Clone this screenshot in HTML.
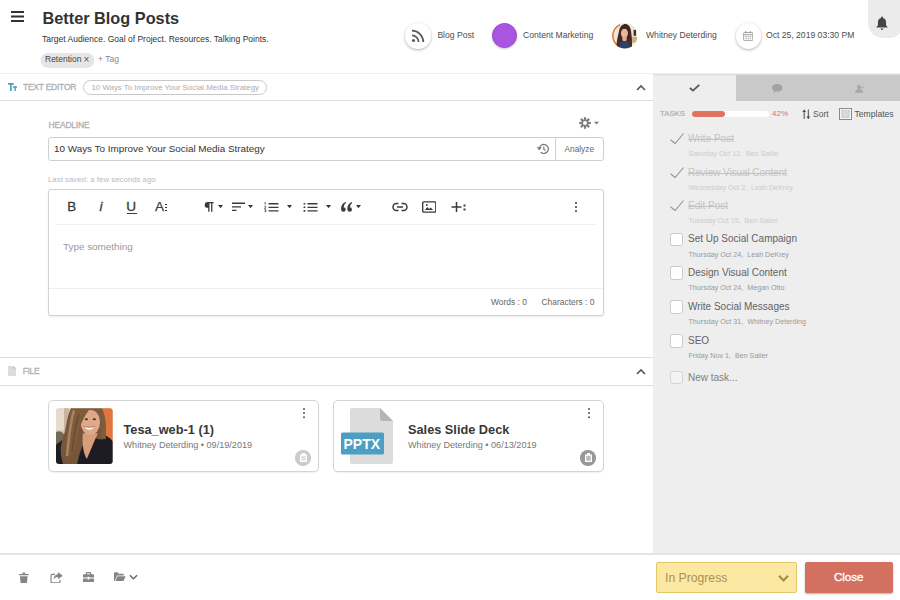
<!DOCTYPE html>
<html>
<head>
<meta charset="utf-8">
<title>Better Blog Posts</title>
<style>
*{box-sizing:border-box;margin:0;padding:0}
html,body{width:900px;height:600px;overflow:hidden;background:#fff}
body{font-family:"Liberation Sans",sans-serif;color:#333;position:relative}
.abs{position:absolute}
.t{position:absolute;white-space:nowrap;line-height:1}
/* header */
#hdr{left:0;top:0;width:900px;height:76px;background:#fff;background-image:linear-gradient(#f1f1f1,#f1f1f1),linear-gradient(#dcdcdc,#dcdcdc),linear-gradient(#ebebeb,#ebebeb);background-size:100% 1px;background-position:0 73px,0 74px,0 75px;background-repeat:no-repeat}
#title{left:42.5px;top:10px;font-size:16.3px;font-weight:bold;color:#333}
#sub{left:42px;top:35px;font-size:8.5px;color:#333}
#tag{left:41px;top:53px;height:13.5px;width:53px;border-radius:7px;background:#e6e6e6;box-shadow:0 .5px 1px rgba(0,0,0,.18)}
#tagtx{left:45px;top:55px;font-size:8.5px;color:#444}
#addtag{left:98px;top:55px;font-size:8.5px;color:#888}
.circ{border-radius:50%;background:#fff;box-shadow:0 1px 3px rgba(0,0,0,.3)}
.meta{font-size:8.6px;color:#4c4c4c;top:31px}
#bell{left:868px;top:0;width:33px;height:38px;background:#ebebeb;border-radius:0 0 10px 15px}
/* section bars */
.bar{left:0;width:653px;height:27px;background:#fff;border-bottom:1px solid #dedede}
.barlbl{font-size:8px;color:#aaa;letter-spacing:.2px}
/* sidebar */
#side{left:653px;top:76px;width:247px;height:480px;background:#eeeeee}
#tabs{left:736px;top:75px;width:164px;height:26px;background:#c9c9c9}
.task{font-size:10px;color:#636363}
.tsub{font-size:7.15px;color:#999}
.done{color:#c3c3c3}
.doneS{color:#cbcbcb}
.cb{width:13.5px;height:13.5px;border:1px solid #cacaca;border-radius:2.5px;background:#fff}
/* footer */
#ftr{left:0;top:553px;width:900px;height:47px;background:#fff;border-top:2px solid #e4e4e4}
#prog{left:656px;top:562px;width:141px;height:31px;background:#fbe8a3;border:1px solid #e3c866;border-radius:2px}
#close{left:805px;top:562px;width:88px;height:31px;background:#d4705f;border-radius:2px;box-shadow:0 1px 2px rgba(0,0,0,.3)}
/* cards */
.card{height:72px;width:271px;border:1px solid #d4d4d4;border-radius:5px;background:#fff;box-shadow:0 1px 1px rgba(0,0,0,.06)}
.ctitle{font-size:12.75px;font-weight:bold;color:#383838}
.csub{font-size:9.1px;color:#777}
</style>
</head>
<body>
<!-- HEADER -->
<div id="hdr" class="abs"></div>
<svg class="abs" style="left:11px;top:11px" width="14" height="11" viewBox="0 0 14 11"><path d="M0 1h13M0 5.5h13M0 10h13" stroke="#333" stroke-width="1.8" fill="none"/></svg>
<div id="title" class="t">Better Blog Posts</div>
<div id="sub" class="t">Target Audience. Goal of Project. Resources. Talking Points.</div>
<div id="tag" class="abs"></div>
<div id="tagtx" class="t">Retention<span style="font-size:10px;color:#555;position:relative;left:2px;top:.5px;line-height:0">×</span></div>
<div id="addtag" class="t">+ Tag</div>


<!-- header meta -->
<div class="abs circ" style="left:405px;top:23.200px;width:25.500px;height:25.500px"></div>
<svg class="abs" style="left:411px;top:29px" width="14" height="14" viewBox="0 0 14 14"><circle cx="2.500" cy="11.500" r="1.550" fill="#5a5a5a"/><path d="M1 6.400a6.600 6.600 0 0 1 6.600 6.600M1 1.700A11.300 11.300 0 0 1 12.300 13" stroke="#5a5a5a" stroke-width="1.750" fill="none"/></svg>
<div class="t meta" style="left:437.400px">Blog Post</div>
<div class="abs" style="left:492.200px;top:23.200px;width:25px;height:25px;border-radius:50%;background:#a955e2;border:1px solid #9a49d2;box-shadow:0 1px 2px rgba(0,0,0,.22)"></div>
<div class="t meta" style="left:523px">Content Marketing</div>
<svg class="abs" style="left:611.500px;top:23px" width="25.500" height="25.500" viewBox="0 0 26 26"><defs><clipPath id="av"><circle cx="13" cy="13" r="13"/></clipPath><filter id="bl2" x="-10%" y="-10%" width="120%" height="120%"><feGaussianBlur stdDeviation=".45"/></filter></defs><g clip-path="url(#av)"><rect width="26" height="26" fill="#efe6da"/><g filter="url(#bl2)"><circle cx="13" cy="13" r="12.300" fill="none" stroke="#e57a34" stroke-width="1.800" stroke-dasharray="26 60" transform="rotate(125 13 13)"/><rect x="22" y="7" width="2.500" height="6" fill="#3a3030"/><rect x="19" y="14" width="7" height="6" fill="#c9b48a"/><path d="M5 27C4 20 6 14 7 9 8 3 11 1 13.500 1S19 3 19.500 9C20 14 21 20 20 27z" fill="#3f271c"/><ellipse cx="12.700" cy="10.500" rx="3.600" ry="4.800" fill="#e6b79c"/><path d="M9 7C10 4 15 3.500 17 7 15 5.500 11 5.500 9 7z" fill="#3f271c"/><path d="M10.500 14h4.500v3.500l-2.200 1.500-2.300-1.500z" fill="#e0ac90"/><path d="M6 27C6 21 9 17.500 13 18.500 17 17.500 20 21 20 27z" fill="#2f4068"/><path d="M6.500 16C5.500 19 5 22 5.500 26L8 25C8 21 8 18 9 15zM19 16C20 19 20.500 22 20 26L17.500 25C17.500 21 17.500 18 16.500 15z" fill="#4a3020"/></g></g></svg>
<div class="t meta" style="left:646px">Whitney Deterding</div>
<div class="abs circ" style="left:735.500px;top:23.200px;width:25.500px;height:25.500px"></div>
<svg class="abs" style="left:743px;top:30.800px" width="10.400" height="10.200" viewBox="0 0 11 11"><rect x=".6" y="1.6" width="9.8" height="8.8" rx="1" fill="none" stroke="#999" stroke-width="1"/><path d="M.6 4h9.8M3 0v2.5M8 0v2.5" stroke="#999" stroke-width="1"/><path d="M2.5 5.5h1.5v1.3H2.5zM4.8 5.5h1.5v1.3H4.8zM7.1 5.5h1.5v1.3H7.1zM2.5 7.7h1.5v1.3H2.5zM4.8 7.7h1.5v1.3H4.8zM7.1 7.7h1.5v1.3H7.1z" fill="#aaa"/></svg>
<div class="t meta" style="left:766px">Oct 25, 2019 03:30 PM</div>
<div id="bell" class="abs"></div>
<svg class="abs" style="left:876.400px;top:16px" width="12" height="14.500" viewBox="0 0 12 15"><path d="M6 0.5c.6 0 1 .4 1 1v.5c2 .5 3.200 2.200 3.200 4.300v3.200l1.500 1.800v.7H.3v-.7l1.500-1.800V6.300c0-2.100 1.200-3.800 3.200-4.300v-.5c0-.6.400-1 1-1zM4.500 13h3a1.500 1.500 0 0 1-3 0z" fill="#444"/></svg>

<!-- SECTION: TEXT EDITOR -->
<div class="abs bar" style="top:74px"></div>
<div class="abs bar" style="top:357px;border-top:1px solid #dedede;height:29px"></div>


<!-- text editor bar contents -->
<svg class="abs" style="left:7.7px;top:83px" width="9.8" height="8.2" viewBox="0 0 12 10" preserveAspectRatio="none"><path d="M0 0h7v2H4.500v8h-2V2H0zM6 4h5.500v1.700H9.600V10H7.900V5.700H6z" fill="#4a9cc0"/></svg>
<div class="t" style="left:23px;top:83px;font-size:8.5px;letter-spacing:-.25px;color:#b0b0b0;-webkit-text-stroke:.3px #b0b0b0">TEXT EDITOR</div>
<div class="abs" style="left:83px;top:80px;width:183.500px;height:15px;border:1px solid #c8c8c8;border-radius:7.500px;background:#fff"></div>
<div class="t" style="left:91.500px;top:84px;font-size:7.85px;color:#adadad">10 Ways To Improve Your Social Media Strategy</div>
<svg class="abs" style="left:636px;top:84px" width="10" height="7" viewBox="0 0 10 7"><path d="M1 6l4-4 4 4" stroke="#555" stroke-width="1.600" fill="none"/></svg>

<!-- headline -->
<div class="t" style="left:48.500px;top:121px;font-size:8.5px;color:#b0b0b0;letter-spacing:-.2px;-webkit-text-stroke:.3px #b0b0b0">HEADLINE</div>
<svg class="abs" style="left:578.700px;top:116.500px" width="22" height="12" viewBox="0 0 22 12"><g transform="translate(6 6)" fill="#7c7c7c"><circle r="3.600"/><g id="gt"><rect x="-1.100" y="-5.800" width="2.200" height="3" /><rect x="-1.100" y="2.800" width="2.200" height="3"/></g><use href="#gt" transform="rotate(45)"/><use href="#gt" transform="rotate(90)"/><use href="#gt" transform="rotate(135)"/><circle r="2" fill="#fff"/></g><path d="M15 4.800h5l-2.500 2.800z" fill="#777"/></svg>
<div class="abs" style="left:48px;top:137px;width:556px;height:24px;border:1px solid #cfcfcf;border-radius:3px;background:#fff"></div>
<div class="abs" style="left:555px;top:137px;width:1px;height:24px;background:#cfcfcf"></div>
<div class="t" style="left:54px;top:144px;font-size:9.9px;color:#333">10 Ways To Improve Your Social Media Strategy</div>
<svg class="abs" style="left:536px;top:142.500px" width="13" height="12" viewBox="0 0 12 11"><path d="M3 5.500a4.200 4.200 0 1 1 1.300 3" stroke="#777" stroke-width="1.100" fill="none"/><path d="M.6 3.800h4.800L3 6.600z" fill="#777"/><path d="M7.200 3.200v2.500l1.700 1" stroke="#777" stroke-width="1" fill="none"/></svg>
<div class="t" style="left:564.500px;top:145px;font-size:8.3px;color:#666">Analyze</div>
<div class="t" style="left:48px;top:176px;font-size:7.85px;color:#bbb">Last saved: a few seconds ago</div>

<!-- editor box -->
<div class="abs" style="left:48px;top:189px;width:556px;height:127px;border:1px solid #d2d2d2;border-radius:3px;background:#fff;box-shadow:0 1px 2px rgba(0,0,0,.08)"></div>
<div class="abs" style="left:56px;top:224px;width:540px;height:1px;background:#f1f1f1"></div>
<div class="abs" style="left:49px;top:288px;width:554px;height:1px;background:#eeeeee"></div>
<div class="t" style="left:63px;top:241.500px;font-size:9.9px;color:#999">Type something</div>
<div class="t" style="left:491px;top:297.500px;font-size:8.45px;color:#666">Words : 0</div>
<div class="t" style="left:541.500px;top:297.500px;font-size:8.45px;color:#666">Characters : 0</div>
<!-- toolbar -->
<div class="t" style="left:67.3px;top:200px;font-size:13.400px;color:#3a3a3a;-webkit-text-stroke:.3px #3a3a3a">B</div>
<div class="t" style="left:99.500px;top:200px;font-size:13.600px;color:#3a3a3a;font-style:italic;-webkit-text-stroke:.3px #3a3a3a">i</div>
<div class="t" style="left:126.200px;top:200px;font-size:13.600px;color:#3a3a3a;-webkit-text-stroke:.3px #3a3a3a">U</div>
<div class="abs" style="left:126.500px;top:212.500px;width:10.200px;height:1.300px;background:#3a3a3a"></div>
<div class="t" style="left:155px;top:200px;font-size:13.600px;color:#3a3a3a;-webkit-text-stroke:.25px #3a3a3a">A</div>
<div class="abs" style="left:165.300px;top:203.700px;width:1.700px;height:1.700px;background:#3a3a3a;box-shadow:0 3px 0 #3a3a3a,0 6px 0 #3a3a3a"></div>
<svg class="abs" style="left:204px;top:202px" width="9.600" height="9.800" viewBox="0 0 9.600 9.800"><path d="M3.600 0H9.600V1.300H8.400V9.800H7.100V1.300H5.500V9.800H4.200V5.800H3.600A2.900 2.900 0 0 1 3.600 0z" fill="#3a3a3a"/></svg>
<svg class="abs" style="left:218.2px;top:205.3px" width="5" height="3.2" viewBox="0 0 5 3.2"><path d="M0 0h5L2.500 3.200z" fill="#333"/></svg>
<svg class="abs" style="left:232px;top:202px" width="13" height="10" viewBox="0 0 13 10"><path d="M0 1.200h13M0 4.800h9M0 8.400h4.500" stroke="#3a3a3a" stroke-width="1.350"/></svg>
<svg class="abs" style="left:248.3px;top:205.3px" width="5" height="3.2" viewBox="0 0 5 3.2"><path d="M0 0h5L2.500 3.200z" fill="#333"/></svg>
<svg class="abs" style="left:263.500px;top:201.500px" width="15" height="11" viewBox="0 0 15 11"><path d="M4.500 1.700h10M4.500 5.300h10M4.500 8.900h10" stroke="#3a3a3a" stroke-width="1.350"/><path d="M1.300 .2v2.600M.5 .9l.8-.7M.4 4.300h1.500v.8L.4 6.300h1.600M.4 7.600h1.500v1H1.200h.7v1.100H.4" stroke="#3a3a3a" stroke-width=".7" fill="none"/></svg>
<svg class="abs" style="left:287px;top:205.3px" width="5" height="3.2" viewBox="0 0 5 3.2"><path d="M0 0h5L2.500 3.200z" fill="#333"/></svg>
<svg class="abs" style="left:302.500px;top:201.500px" width="15" height="11" viewBox="0 0 15 11"><path d="M4.500 1.700h10M4.500 5.300h10M4.500 8.900h10" stroke="#3a3a3a" stroke-width="1.350"/><path d="M.6 .9h1.700v1.600H.6zM.6 4.500h1.700v1.600H.6zM.6 8.100h1.700v1.600H.6z" fill="#3a3a3a"/></svg>
<svg class="abs" style="left:326px;top:205.3px" width="5" height="3.2" viewBox="0 0 5 3.2"><path d="M0 0h5L2.500 3.200z" fill="#333"/></svg>
<svg class="abs" style="left:340.500px;top:202px" width="11.600" height="10" viewBox="0 0 11.600 10"><g id="q6" fill="#3a3a3a"><circle cx="2.400" cy="7.500" r="2.250"/><path d="M0 7.300C0 3.300 1.800 1 4.700 0L5.200 1C3.500 2 2.800 3.500 2.800 5.200z"/></g><use href="#q6" x="6.300"/></svg>
<svg class="abs" style="left:356.2px;top:205.3px" width="5" height="3.2" viewBox="0 0 5 3.2"><path d="M0 0h5L2.500 3.200z" fill="#333"/></svg>
<svg class="abs" style="left:391.500px;top:202px" width="16" height="10" viewBox="0 0 16 10"><path d="M6.500 1.500H4.500a3.500 3.500 0 0 0 0 7h2M9.500 1.500h2a3.500 3.500 0 0 1 0 7h-2M5 5h6" stroke="#3a3a3a" stroke-width="1.500" fill="none"/></svg>
<svg class="abs" style="left:421.500px;top:201px" width="14.500" height="12" viewBox="0 0 15 12"><rect x=".7" y=".7" width="13.600" height="10.600" rx="1.200" stroke="#3a3a3a" stroke-width="1.400" fill="none"/><path d="M3 9l2.500-3 2 2 1.500-1.500L11.500 9z" fill="#3a3a3a"/><circle cx="5" cy="4" r="1" fill="#3a3a3a"/></svg>
<svg class="abs" style="left:451px;top:201px" width="15" height="12" viewBox="0 0 15 12"><path d="M5.500 1v10M.5 6h10" stroke="#3a3a3a" stroke-width="1.500"/><path d="M12.500 3.500h2v2h-2zM12.500 7.500h2v2h-2z" fill="#3a3a3a"/></svg>
<div class="abs" style="left:575px;top:202px;width:2px;height:2px;background:#3a3a3a;box-shadow:0 4px 0 #3a3a3a,0 8px 0 #3a3a3a;border-radius:1px"></div>

<!-- file bar -->
<svg class="abs" style="left:8px;top:365.800px" width="8" height="10.500" viewBox="0 0 8 10.500"><path d="M0 0h5.500L8 2.500v8H0z" fill="#dcdcdc"/><path d="M5.500 0v2.500H8z" fill="#b8b8b8"/></svg>
<div class="t" style="left:22.800px;top:367px;font-size:8.5px;letter-spacing:-.4px;color:#b0b0b0;-webkit-text-stroke:.3px #b0b0b0">FILE</div>
<svg class="abs" style="left:636px;top:368px" width="10" height="7" viewBox="0 0 10 7"><path d="M1 6l4-4 4 4" stroke="#555" stroke-width="1.600" fill="none"/></svg>

<!-- card 1 -->
<div class="abs card" style="left:48px;top:400px"></div>
<svg class="abs" style="left:56px;top:407.700px" width="56.700" height="56.300" viewBox="0 0 57 56"><defs><clipPath id="th"><rect width="57" height="56" rx="3"/></clipPath><filter id="bl" x="-10%" y="-10%" width="120%" height="120%"><feGaussianBlur stdDeviation=".7"/></filter></defs><g clip-path="url(#th)"><rect width="57" height="56" fill="#d6c6b2"/><g filter="url(#bl)"><rect x="-2" y="-2" width="16" height="24" fill="#e6dccd"/><rect x="8" y="-2" width="5" height="30" fill="#c9b59d"/><ellipse cx="3" cy="33" rx="7" ry="10" fill="#6f6b56"/><rect x="46" y="-2" width="13" height="37" fill="#e0763a"/><path d="M-2 58V39C3 33 9 30 17 29L47 26C53 28 59 33 59 39V58z" fill="#1d1e21"/><path d="M16-2C10 9 11 20 7 30 3 40 5 50 8 58H21C23 46 26 38 30 32L48 31C51 20 50 8 45-2z" fill="#76553a"/><path d="M27 25L42 25 31 51C28 46 26 38 27 25z" fill="#d79d7c"/><ellipse cx="34.500" cy="14" rx="9.800" ry="13" fill="#e0a888"/><path d="M16-2C12 10 12 22 9 34L13 52 20 40C21 28 24 14 33 2 38 1 43 4 45 12 46 18 46 24 45 30L50 31C51 18 50 6 45-2z" fill="#7d5b3e"/><path d="M18 2C14 16 13 30 11 48" stroke="#a8845e" stroke-width="2.500" fill="none"/><path d="M23 6C19 18 18 30 16 44" stroke="#5f4029" stroke-width="1.500" fill="none" opacity=".6"/><ellipse cx="30.500" cy="11" rx="1.700" ry=".9" fill="#4a3325"/><ellipse cx="38.500" cy="11" rx="1.700" ry=".9" fill="#4a3325"/><path d="M28.500 18.500C31 22.500 36 22.500 38.500 18.500 35 19.500 32 19.500 28.500 18.500z" fill="#fff"/><path d="M28 18C31 19.500 36 19.500 39 18" stroke="#b5655c" stroke-width=".8" fill="none"/><path d="M40 30L33 50 48 56 57 45 57 36z" fill="#1d1e21"/></g></g></svg>
<div class="t ctitle" style="left:123.500px;top:424px">Tesa_web-1 (1)</div>
<div class="t csub" style="left:123.500px;top:441px">Whitney Deterding • 09/19/2019</div>
<div class="abs" style="left:303px;top:407.800px;width:2.200px;height:2.200px;background:#555;box-shadow:0 4.100px 0 #555,0 8.200px 0 #555;border-radius:50%"></div>
<div class="abs" style="left:295.300px;top:450px;width:15.600px;height:15.600px;border-radius:50%;background:#cbcbcb"></div>
<svg class="abs" style="left:299.600px;top:453.200px" width="7" height="9" viewBox="0 0 7 9"><path d="M0 1.500h7V9H0z" fill="#fff"/><path d="M2 0h3v2H2z" fill="#fff"/><path d="M1.200 2.800h4.600v5H1.200z" fill="#cdcdcd" opacity=".6"/></svg>

<!-- card 2 -->
<div class="abs card" style="left:333px;top:400px"></div>
<svg class="abs" style="left:340px;top:408px" width="54" height="57" viewBox="0 0 54 57"><path d="M12 0h28l13 13v41a2 2 0 0 1-2 2H12a2 2 0 0 1-2-2V2a2 2 0 0 1 2-2z" fill="#dcdcdc"/><path d="M40 0l13 13H42a2 2 0 0 1-2-2z" fill="#b5b5b5"/><rect x="1" y="24.500" width="43" height="22" rx="1.500" fill="#4c9ec4"/></svg>
<div class="t" style="left:343.500px;top:436.5px;font-size:14px;font-weight:bold;color:#fff;">PPTX</div>
<div class="t ctitle" style="left:408px;top:424px">Sales Slide Deck</div>
<div class="t csub" style="left:408px;top:441px">Whitney Deterding • 06/13/2019</div>
<div class="abs" style="left:587.500px;top:407.800px;width:2.200px;height:2.200px;background:#555;box-shadow:0 4.100px 0 #555,0 8.200px 0 #555;border-radius:50%"></div>
<div class="abs" style="left:580.200px;top:450px;width:15.600px;height:15.600px;border-radius:50%;background:#989898"></div>
<svg class="abs" style="left:584.500px;top:453.200px" width="7" height="9" viewBox="0 0 7 9"><path d="M0 1.500h7V9H0z" fill="#fff"/><path d="M2 0h3v2H2z" fill="#fff"/><path d="M1.200 2.800h4.600v5H1.200z" fill="#8f8f8f" opacity=".6"/></svg>

<!-- SIDEBAR -->
<div id="side" class="abs"></div>
<div id="tabs" class="abs"></div>


<!-- tab icons -->
<svg class="abs" style="left:688.8px;top:84.3px" width="11.200" height="7.800" viewBox="0 0 12 9" preserveAspectRatio="none"><path d="M1 4.600l3.300 3L11 1" stroke="#5a5a5a" stroke-width="2.100" fill="none"/></svg>
<svg class="abs" style="left:771.5px;top:83.7px" width="10.500" height="9.500" viewBox="0 0 11 10"><path d="M5.500 0C8.500 0 11 1.700 11 4s-2.500 4-5.500 4c-.6 0-1.200-.1-1.700-.2L1.500 9.500l.6-2.300C.8 6.500 0 5.300 0 4 0 1.700 2.500 0 5.500 0z" fill="#a2a2a2"/></svg>
<svg class="abs" style="left:855px;top:84.500px" width="9" height="8" viewBox="0 0 9 8"><circle cx="4" cy="2" r="1.900" fill="#a6a6a6"/><path d="M0 7.800c0-2.600 1.700-3.700 4-3.700s4 1.100 4 3.700z" fill="#a6a6a6"/><path d="M5.800 3.200L8.800 2" stroke="#a6a6a6" stroke-width=".9"/></svg>

<!-- tasks header -->
<div class="t" style="left:660px;top:110px;font-size:7.800px;color:#adadad;-webkit-text-stroke:.2px #adadad">TASKS</div>
<div class="abs" style="left:692px;top:111px;width:77px;height:6px;border-radius:3px;background:#fff"></div>
<div class="abs" style="left:692px;top:111px;width:33px;height:6px;border-radius:3px;background:#e0735e"></div>
<div class="t" style="left:772px;top:110px;font-size:8px;color:#e0735e">42%</div>
<svg class="abs" style="left:802px;top:108.500px" width="8.500" height="10.500" viewBox="0 0 9 11"><path d="M2.300 1v9.500M6.700 .5v9.500" stroke="#4a4a4a" stroke-width="1.050"/><path d="M.3 3.200L2.300 .4l2 2.800zM4.700 7.800l2 2.800 2-2.800z" fill="#4a4a4a"/></svg>
<div class="t" style="left:813px;top:110px;font-size:8.500px;color:#555">Sort</div>
<svg class="abs" style="left:839px;top:108px" width="13" height="12" viewBox="0 0 13 12"><rect x=".5" y=".5" width="12" height="11" fill="#f4f4f4" stroke="#8a8a8a" stroke-width="1"/><rect x="2.800" y="2.500" width="7.400" height="7" fill="#dadada" stroke="#aaa" stroke-width=".8" stroke-dasharray="1 1"/></svg>
<div class="t" style="left:854.500px;top:110px;font-size:8.600px;color:#555">Templates</div>
<svg class="abs" style="left:669.5px;top:133.3px" width="14" height="11" viewBox="0 0 14 11"><path d="M.5 6.800l4.600 3.700L13.500 .5" stroke="#959595" stroke-width="1.150" fill="none"/></svg>
<div class="t task done" style="left:688px;top:134px;text-decoration:line-through">Write Post</div>
<div class="t tsub doneS" style="left:688.500px;top:151px">Saturday Oct 12,&nbsp; Ben Sailer</div>
<svg class="abs" style="left:669.5px;top:166.8px" width="14" height="11" viewBox="0 0 14 11"><path d="M.5 6.800l4.600 3.700L13.500 .5" stroke="#959595" stroke-width="1.150" fill="none"/></svg>
<div class="t task done" style="left:688px;top:168px;letter-spacing:-.08px;text-decoration:line-through">Review Visual Content</div>
<div class="t tsub doneS" style="left:688.500px;top:185px">Wednesday Oct 2,&nbsp; Leah DeKrey</div>
<svg class="abs" style="left:669.5px;top:200.3px" width="14" height="11" viewBox="0 0 14 11"><path d="M.5 6.800l4.600 3.700L13.500 .5" stroke="#959595" stroke-width="1.150" fill="none"/></svg>
<div class="t task done" style="left:688px;top:201px;text-decoration:line-through">Edit Post</div>
<div class="t tsub doneS" style="left:688.500px;top:218px">Tuesday Oct 15,&nbsp; Ben Sailer</div>
<div class="abs cb" style="left:669.5px;top:232.7px"></div>
<div class="t task" style="left:688px;top:234px">Set Up Social Campaign</div>
<div class="t tsub" style="left:688.500px;top:252px">Thursday Oct 24,&nbsp; Leah DeKrey</div>
<div class="abs cb" style="left:669.5px;top:266.3px"></div>
<div class="t task" style="left:688px;top:268px">Design Visual Content</div>
<div class="t tsub" style="left:688.500px;top:285px">Thursday Oct 24,&nbsp; Megan Otto</div>
<div class="abs cb" style="left:669.5px;top:300px"></div>
<div class="t task" style="left:688px;top:302px">Write Social Messages</div>
<div class="t tsub" style="left:688.500px;top:319px">Thursday Oct 31,&nbsp; Whitney Deterding</div>
<div class="abs cb" style="left:669.5px;top:334px"></div>
<div class="t task" style="left:688px;top:336px">SEO</div>
<div class="t tsub" style="left:688.500px;top:353px">Friday Nov 1,&nbsp; Ben Sailer</div>
<div class="abs cb" style="left:669.5px;top:370.8px;background:#f3f3f3;border-color:#d4d4d4"></div>
<div class="t task" style="left:688px;top:373px;color:#808080">New task...</div>

<!-- FOOTER -->
<div id="ftr" class="abs"></div>
<div id="prog" class="abs"></div>
<div class="t" style="left:665px;top:572px;font-size:12.2px;color:#ab9150">In Progress</div>
<div id="close" class="abs"></div>
<div class="t" style="left:834px;top:572px;font-size:11.5px;color:#fff;-webkit-text-stroke:.35px #fff">Close</div>

<!-- footer icons -->
<svg class="abs" style="left:19px;top:571.500px" width="9.600" height="11.500" viewBox="0 0 10 12"><path d="M0 2h10v1.500H0zM3.500 .5h3V2h-3zM1 4.500h8l-.7 7H1.700z" fill="#858585"/></svg>
<svg class="abs" style="left:49.500px;top:571.500px" width="13" height="11.500" viewBox="0 0 13 12"><path d="M5 2.500H2a1.200 1.200 0 0 0-1.200 1.200V10a1.200 1.200 0 0 0 1.200 1.200h7A1.200 1.200 0 0 0 10.200 10V8" stroke="#858585" stroke-width="1.200" fill="none"/><path d="M8 0l5 3.800L8 7.500V5.200C5.500 5.200 4.200 6.200 3.500 8 3.500 5 5 2.700 8 2.400z" fill="#858585"/></svg>
<svg class="abs" style="left:83.200px;top:572px" width="11" height="10.200" viewBox="0 0 12 11"><path d="M4 0h4a1 1 0 0 1 1 1v1.500h2a1 1 0 0 1 1 1V6H7v-1H5v1H0V3.500a1 1 0 0 1 1-1h2V1a1 1 0 0 1 1-1zm.3 1.200v1.300h3.400V1.200zM0 7h5v1h2V7h5v3a1 1 0 0 1-1 1H1a1 1 0 0 1-1-1z" fill="#858585"/></svg>
<svg class="abs" style="left:114.300px;top:571.500px" width="11.600" height="9.600" viewBox="0 0 13 10"><path d="M0 1a1 1 0 0 1 1-1h3l1.200 1.500H10a1 1 0 0 1 1 1V3.500H3.500L1 9.500H0z" fill="#858585"/><path d="M4 4.500h9L10.500 10H1.500z" fill="#858585"/></svg>
<svg class="abs" style="left:129px;top:574px" width="9" height="7" viewBox="0 0 10 7"><path d="M1 1l4 4 4-4" stroke="#6a6a6a" stroke-width="1.600" fill="none"/></svg>
<svg class="abs" style="left:778.3px;top:574px" width="11" height="9" viewBox="0 0 11 9"><path d="M1 1.800l4.500 4.700L10 1.800" stroke="#ad8a40" stroke-width="2.200" fill="none"/></svg>
</body>
</html>
